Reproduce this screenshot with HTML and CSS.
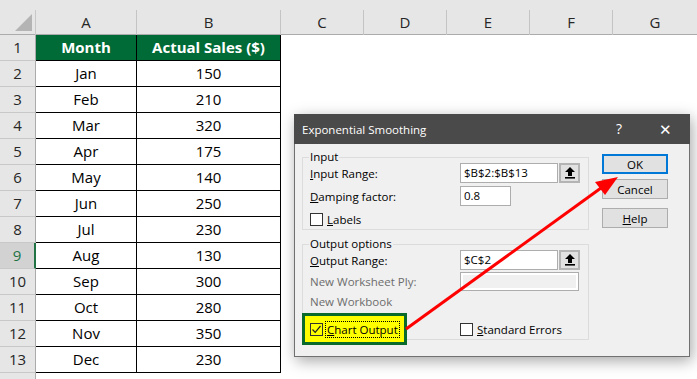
FILE: index.html
```html
<!DOCTYPE html>
<html lang="en">
<head>
    <meta charset="UTF-8">
    <meta name="viewport" content="width=device-width, initial-scale=1.0">
    <title>Exponential Smoothing</title>
    <link rel="stylesheet" href="styles.css">
</head>
<body>
    <div class="sheet">
        <div class="band"></div>
        <div class="colheads">
            <div class="corner"><span class="tri"></span></div>
            <div class="ch">A</div>
            <div class="ch">B</div>
            <div class="ch">C</div>
            <div class="ch">D</div>
            <div class="ch">E</div>
            <div class="ch">F</div>
            <div class="ch last">G</div>
        </div>
        <div class="row">
            <div class="rh">1</div>
            <div class="c hd">Month</div>
            <div class="c hd">Actual Sales ($)</div>
            <div class="rest"></div>
        </div>
        <div class="row"><div class="rh">2</div><div class="c">Jan</div><div class="c">150</div><div class="rest"></div></div>
        <div class="row"><div class="rh">3</div><div class="c">Feb</div><div class="c">210</div><div class="rest"></div></div>
        <div class="row"><div class="rh">4</div><div class="c">Mar</div><div class="c">320</div><div class="rest"></div></div>
        <div class="row"><div class="rh">5</div><div class="c">Apr</div><div class="c">175</div><div class="rest"></div></div>
        <div class="row"><div class="rh">6</div><div class="c">May</div><div class="c">140</div><div class="rest"></div></div>
        <div class="row"><div class="rh">7</div><div class="c">Jun</div><div class="c">250</div><div class="rest"></div></div>
        <div class="row"><div class="rh">8</div><div class="c">Jul</div><div class="c">230</div><div class="rest"></div></div>
        <div class="row"><div class="rh sel">9</div><div class="c">Aug</div><div class="c">130</div><div class="rest"></div></div>
        <div class="row"><div class="rh">10</div><div class="c">Sep</div><div class="c">300</div><div class="rest"></div></div>
        <div class="row"><div class="rh">11</div><div class="c">Oct</div><div class="c">280</div><div class="rest"></div></div>
        <div class="row"><div class="rh">12</div><div class="c">Nov</div><div class="c">350</div><div class="rest"></div></div>
        <div class="row"><div class="rh">13</div><div class="c">Dec</div><div class="c">230</div><div class="rest"></div></div>
        <div class="row"><div class="rh"></div><div class="c blank"></div><div class="c blank"></div><div class="rest"></div></div>
    </div>

    <div class="dialog" role="dialog" aria-labelledby="dlg-title">
        <div class="titlebar">
            <span id="dlg-title">Exponential Smoothing</span>
            <div class="controls">
                <span class="ctl">?</span>
                <span class="ctl close">&#x2715;</span>
            </div>
        </div>
        <div class="dlg-body">
            <div class="groups">
                <fieldset class="group in">
                    <legend>Input</legend>
                    <div class="field">
                        <label><u>I</u>nput Range:</label>
                        <span class="box">$B$2:$B$13</span>
                        <span class="pick"><svg width="12" height="12" viewBox="0 0 12 12"><path d="M6 0 L11 5 L8 5 L8 9 L4 9 L4 5 L1 5 Z" fill="#000"/><rect x="1" y="10" width="10" height="1.6" fill="#000"/></svg></span>
                    </div>
                    <div class="field">
                        <label><u>D</u>amping factor:</label>
                        <span class="box short">0.8</span>
                    </div>
                    <div class="check-row">
                        <span class="cb"></span>
                        <span><u>L</u>abels</span>
                    </div>
                </fieldset>
                <fieldset class="group out">
                    <legend>Output options</legend>
                    <div class="field">
                        <label><u>O</u>utput Range:</label>
                        <span class="box">$C$2</span>
                        <span class="pick"><svg width="12" height="12" viewBox="0 0 12 12"><path d="M6 0 L11 5 L8 5 L8 9 L4 9 L4 5 L1 5 Z" fill="#000"/><rect x="1" y="10" width="10" height="1.6" fill="#000"/></svg></span>
                    </div>
                    <div class="field ply">
                        <label class="off">New Worksheet Ply:</label>
                        <span class="box wide off"></span>
                    </div>
                    <div class="field plain">
                        <label class="off">New Workbook</label>
                    </div>
                    <div class="last-row">
                        <div class="mark">
                            <span class="cb on"><svg width="11" height="11" viewBox="0 0 11 11"><path d="M1.5 5.5 L4.2 8.3 L9.5 2" fill="none" stroke="#222" stroke-width="1.2"/></svg></span>
                            <span class="focus"><u>C</u>hart Output</span>
                        </div>
                        <div class="check-row se">
                            <span class="cb"></span>
                            <span><u>S</u>tandard Errors</span>
                        </div>
                    </div>
                </fieldset>
            </div>
            <div class="buttons">
                <button class="btn primary" type="button">OK</button>
                <button class="btn" type="button">Cancel</button>
                <button class="btn help" type="button"><u>H</u>elp</button>
            </div>
        </div>
    </div>

    <svg class="arrow" width="697" height="379" viewBox="0 0 697 379">
        <line x1="406" y1="329" x2="601" y2="188" stroke="#ff0000" stroke-width="3"/>
        <polygon points="618,177 605,195 595,182" fill="#ff0000"/>
    </svg>
</body>
</html>
```

FILE: styles.css
```css
html, body {
  margin: 0;
  padding: 0;
}

body {
  width: 697px;
  height: 379px;
  overflow: hidden;
  position: relative;
  background: #fff;
  font-family: "Open Sans", "Noto Sans", sans-serif;
}

/* spreadsheet */
.sheet {
  width: 697px;
  height: 379px;
  overflow: hidden;
}

.band {
  height: 10px;
  background: #e6e6e6;
}

.colheads {
  display: grid;
  grid-template-columns: 36px 101px 144px 83px 83px 83px 83px 1fr;
  height: 25px;
  background: #e6e6e6;
  border-bottom: 1px solid #ababab;
  box-sizing: border-box;
}

.corner {
  position: relative;
  border-right: 1px solid #c8c8c8;
}

.tri {
  position: absolute;
  right: 3px;
  bottom: 4px;
  width: 0;
  height: 0;
  border-left: 17px solid transparent;
  border-bottom: 17px solid #b4b4b4;
}

.ch {
  border-right: 1px solid #c4c4c4;
  text-align: center;
  font-size: 15px;
  line-height: 25px;
  color: #262626;
}

.ch.last {
  border-right: none;
}

.row {
  display: grid;
  grid-template-columns: 36px 101px 144px 1fr;
  height: 26px;
}

.rh {
  background: #e6e6e6;
  border-right: 1px solid #ababab;
  border-bottom: 1px solid #c8c8c8;
  box-sizing: border-box;
  text-align: center;
  font-size: 15px;
  line-height: 25px;
  color: #262626;
}

.rh.sel {
  background: #d2d2d2;
  color: #217346;
  border-right: 2px solid #217346;
}

.c {
  border-right: 1px solid #000;
  border-bottom: 1px solid #000;
  box-sizing: border-box;
  text-align: center;
  font-size: 15px;
  line-height: 25px;
  color: #000;
}

.c.hd {
  background: #006b36;
  color: #fff;
  font-weight: bold;
}

.c.blank {
  border: none;
}

.rest {
  background: #fff;
}

/* dialog */
.dialog {
  position: absolute;
  left: 294px;
  top: 114px;
  width: 396px;
  height: 243px;
  box-sizing: border-box;
  background: #f0f0f0;
  border: 1px solid #707070;
  border-top: none;
  box-shadow: 2px 4px 14px rgba(0, 0, 0, 0.35);
  font-size: 11.5px;
  color: #000;
}

.titlebar {
  height: 30px;
  background: #4b4a4a;
  color: #fff;
  display: flex;
  align-items: center;
  justify-content: space-between;
  padding-left: 8px;
  margin: 0 -1px;
  font-size: 11.5px;
}

.controls {
  display: flex;
}

.ctl {
  width: 46px;
  text-align: center;
  font-size: 14px;
}

.ctl.close {
  font-size: 15px;
  margin-right: 2px;
}

.dlg-body {
  display: flex;
  gap: 13px;
  padding: 9px 0 0 7px;
}

.groups {
  width: 287px;
  display: flex;
  flex-direction: column;
  gap: 10px;
}

.group {
  margin: 0;
  padding: 0 0 0 7px;
  border: 1px solid #dcdcdc;
  box-sizing: border-box;
  min-width: 0;
}

.group legend {
  padding: 0 1px;
  margin-left: -1px;
  line-height: 8px;
  font-size: 11.5px;
}

.group.in {
  height: 77px;
}

.group.out {
  height: 100px;
}

.field {
  display: flex;
  align-items: center;
  height: 20px;
  margin-top: 3px;
}

.group .field:first-of-type {
  margin-top: 2px;
}

.field label {
  width: 150px;
  flex: none;
}

.field.ply {
  height: 19px;
  margin-top: 2px;
}

.field.plain {
  height: 21px;
  margin-top: 0;
}

.off {
  color: #6d6d6d;
}

.box {
  box-sizing: border-box;
  height: 20px;
  width: 98px;
  background: #fff;
  border: 1px solid #adadad;
  padding-left: 3px;
  line-height: 18px;
  font-size: 11.5px;
}

.box.short {
  width: 51px;
}

.box.wide {
  width: 119px;
  height: 19px;
  background: #f0f0f0;
  box-shadow: inset 0 0 0 2px #fff;
}

.pick {
  box-sizing: border-box;
  width: 21px;
  height: 20px;
  background: #e1e1e1;
  border: 2px solid #b4b4b4;
  display: flex;
  align-items: center;
  justify-content: center;
  margin-left: 1px;
}

.check-row {
  display: flex;
  align-items: center;
  gap: 4px;
  height: 20px;
  margin-top: 3px;
}

.cb {
  box-sizing: border-box;
  width: 13px;
  height: 13px;
  border: 1px solid #333;
  background: #fff;
  display: flex;
  align-items: center;
  justify-content: center;
}

.cb.on {
  background: transparent;
}

.last-row {
  display: flex;
  align-items: center;
  margin-left: -8px;
  margin-top: 1px;
}

.mark {
  box-sizing: border-box;
  width: 105px;
  height: 32px;
  background: #ffff00;
  border: 3px solid #0a6a2c;
  display: flex;
  align-items: center;
  gap: 3px;
  padding-left: 5px;
}

.focus {
  outline: 1px dotted #000;
  outline-offset: 0;
  padding: 0 1px;
  line-height: 15px;
}

.check-row.se {
  margin: 0 0 0 53px;
}

.buttons {
  display: flex;
  flex-direction: column;
  width: 66px;
  padding-top: 1px;
}

.btn {
  box-sizing: border-box;
  height: 20px;
  width: 66px;
  margin: 0 0 5px 0;
  padding: 0;
  background: #e1e1e1;
  border: 1px solid #adadad;
  font-family: inherit;
  font-size: 11.5px;
  color: #000;
}

.btn.primary {
  border: 2px solid #0078d7;
}

.btn.help {
  margin-top: 4px;
}

.arrow {
  position: absolute;
  left: 0;
  top: 0;
  pointer-events: none;
}
```
